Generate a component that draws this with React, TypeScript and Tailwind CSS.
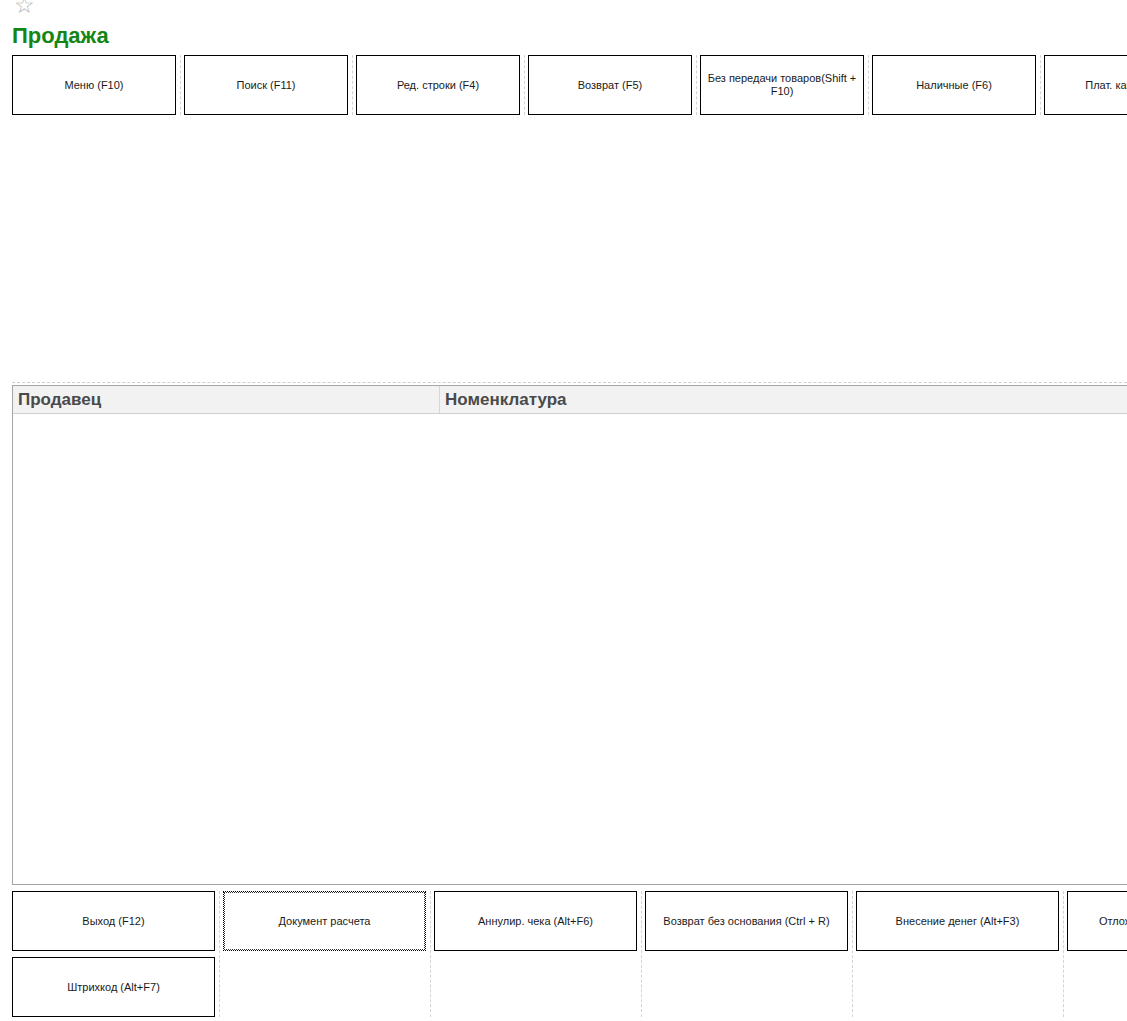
import React from "react";

const TOP_BUTTONS = [
  "Меню (F10)",
  "Поиск (F11)",
  "Ред. строки (F4)",
  "Возврат (F5)",
  "Без передачи товаров(Shift + F10)",
  "Наличные (F6)",
  "Плат. карта (F7)",
];

// bottom panel: columns, each may hold two buttons
const BOTTOM_COLUMNS: (string | null)[][] = [
  ["Выход (F12)", "Штрихкод (Alt+F7)"],
  ["Документ расчета", null],
  ["Аннулир. чека (Alt+F6)", null],
  ["Возврат без основания (Ctrl + R)", null],
  ["Внесение денег (Alt+F3)", null],
  ["Отложенные чеки (Alt+F11)", null],
];

function Separator() {
  return (
    <div className="flex w-[8px] shrink-0 justify-center">
      <div className="h-full border-l border-dashed border-[#d4d4d4]" />
    </div>
  );
}

function FormButton({
  label,
  width,
  focused,
}: {
  label: string;
  width: string;
  focused?: boolean;
}) {
  return (
    <div
      className={`flex h-[60px] shrink-0 items-center justify-center bg-white px-2 text-center text-[11px] leading-[13px] text-[#1a1a1a] ${width} ${
        focused
          ? "border border-dotted border-black outline outline-1 outline-offset-[-2px] outline-dotted outline-[#333]"
          : "border border-black"
      }`}
    >
      <span className="whitespace-nowrap">
        {label.includes("Shift") ? (
          <>
            Без передачи товаров(Shift +
            <br />
            F10)
          </>
        ) : (
          label
        )}
      </span>
    </div>
  );
}

export default function App() {
  return (
    <div
      className="h-[1021px] w-[1127px] overflow-hidden bg-white"
      style={{ fontFamily: '"Liberation Sans", Arial, sans-serif' }}
    >
      <div className="h-[14px] overflow-hidden pl-[14px]">
        <span className="-mt-[8px] block text-[23px] leading-[26px] text-[#b4b4b4]">☆</span>
      </div>
      <h1 className="mt-[9px] pl-[12px] text-[22px] font-bold leading-[25px] text-[#138613]">
        Продажа
      </h1>

      <div className="mt-[7px] flex w-max pl-[12px]">
        {TOP_BUTTONS.map((b, i) => (
          <React.Fragment key={b}>
            {i > 0 && <Separator />}
            <FormButton label={b} width="w-[164px]" />
          </React.Fragment>
        ))}
      </div>

      <div className="ml-[12px] mt-[267px] border-t border-dashed border-[#cfcfcf]" />

      <div className="ml-[12px] mt-[2px] h-[500px] w-[1200px] border border-[#a6a6a6]">
        <div className="flex h-[28px] border-b border-[#cfcfcf] bg-[#f2f2f2] text-[17px] font-bold text-[#4a4a4a]">
          <div className="flex w-[427px] items-center border-r border-[#d6d6d6] pl-[5px]">
            Продавец
          </div>
          <div className="flex flex-1 items-center pl-[5px]">Номенклатура</div>
        </div>
      </div>

      <div className="mt-[6px] flex w-max pl-[12px]">
        {BOTTOM_COLUMNS.map((col, i) => (
          <React.Fragment key={i}>
            {i > 0 && <Separator />}
            <div className="flex w-[203px] shrink-0 flex-col gap-[6px]">
              {col.map((b, j) =>
                b ? (
                  <FormButton key={j} label={b} width="w-[203px]" focused={i === 1} />
                ) : (
                  <div key={j} className="h-[60px]" />
                )
              )}
            </div>
          </React.Fragment>
        ))}
      </div>
    </div>
  );
}
